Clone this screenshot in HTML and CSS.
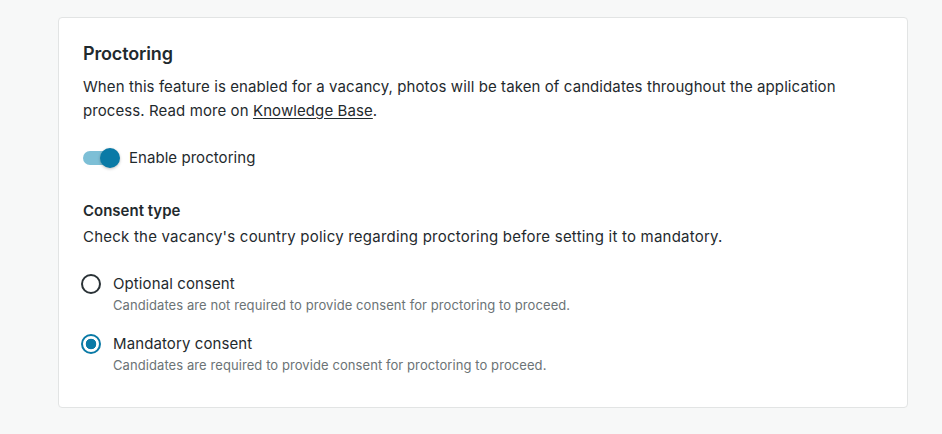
FILE: index.html
```html
<!DOCTYPE html>
<html lang="en">
<head>
<meta charset="utf-8">
<title>Proctoring</title>
<link rel="stylesheet" href="styles.css">
</head>
<body>
<div class="page">
  <section class="card">
    <h2 class="title">Proctoring</h2>
    <p class="desc">When this feature is enabled for a vacancy, photos will be taken of candidates throughout the application process. Read more on <a href="#" class="link">Knowledge Base</a>.</p>
    <label class="toggle-row">
      <span class="toggle"><span class="track"></span><span class="knob"></span></span>
      <span class="toggle-label">Enable proctoring</span>
    </label>
    <h3 class="subtitle">Consent type</h3>
    <p class="subdesc">Check the vacancy's country policy regarding proctoring before setting it to mandatory.</p>
    <div class="options">
      <label class="option">
        <span class="radio"></span>
        <span class="option-text">
          <span class="option-label">Optional consent</span>
          <span class="option-help">Candidates are not required to provide consent for proctoring to proceed.</span>
        </span>
      </label>
      <label class="option">
        <span class="radio checked"></span>
        <span class="option-text">
          <span class="option-label">Mandatory consent</span>
          <span class="option-help">Candidates are required to provide consent for proctoring to proceed.</span>
        </span>
      </label>
    </div>
  </section>
</div>
</body>
</html>
```
FILE: styles.css
```css
* { box-sizing: border-box; }
html, body {
  margin: 0;
  padding: 0;
  background: #f7f8f8;
  font-family: Inter, "Noto Sans", sans-serif;
  color: #1f2a2e;
}
.page {
  padding: 17px 34px 26px 58px;
}
.card {
  background: #fff;
  border: 1px solid #e2e4e4;
  border-radius: 4px;
  padding: 24px 24px 24px 24px;
  height: 391px;
}
.title {
  margin: 0 0 9px 0;
  font-size: 18px;
  line-height: 24px;
  font-weight: 600;
  letter-spacing: -0.15px;
}
.desc {
  margin: 0;
  font-size: 15px;
  line-height: 24px;
  letter-spacing: 0.09px;
}
.link {
  color: inherit;
  text-decoration: underline;
  text-underline-offset: 2px;
}
.toggle-row {
  display: flex;
  align-items: center;
  gap: 9px;
  margin-top: 25px;
  height: 20px;
}
.toggle {
  position: relative;
  width: 37px;
  height: 20px;
  flex: none;
}
.track {
  position: absolute;
  left: 0;
  top: 3px;
  width: 34px;
  height: 14px;
  border-radius: 7px;
  background: #7dbfd6;
}
.knob {
  position: absolute;
  left: 17px;
  top: 0;
  width: 20px;
  height: 20px;
  border-radius: 50%;
  background: #0a7aa6;
  box-shadow: 0 1px 3px rgba(0,0,0,0.25);
}
.toggle-label {
  font-size: 15px;
  line-height: 20px;
  letter-spacing: 0.05px;
}
.subtitle {
  margin: 31px 0 2px 0;
  font-size: 15px;
  line-height: 24px;
  font-weight: 600;
}
.subdesc {
  margin: 0;
  font-size: 15px;
  line-height: 24px;
  letter-spacing: 0.22px;
}
.options {
  display: flex;
  flex-direction: column;
  gap: 18px;
  margin-top: 24px;
}
.option {
  display: flex;
  gap: 12px;
  align-items: flex-start;
}
.radio {
  flex: none;
  width: 20px;
  height: 20px;
  margin: 1px 0 0 -2px;
  border-radius: 50%;
  border: 2px solid #2a3236;
  background: #fff;
}
.radio.checked {
  border-color: #0a7aa6;
  background: radial-gradient(circle, #0a7aa6 0 5px, #fff 5.6px);
}
.option-text {
  display: flex;
  flex-direction: column;
}
.option-label {
  font-size: 15px;
  line-height: 22px;
  letter-spacing: 0.1px;
}
.option-help {
  font-size: 13px;
  line-height: 20px;
  color: #6b7376;
  letter-spacing: 0.08px;
}
```
